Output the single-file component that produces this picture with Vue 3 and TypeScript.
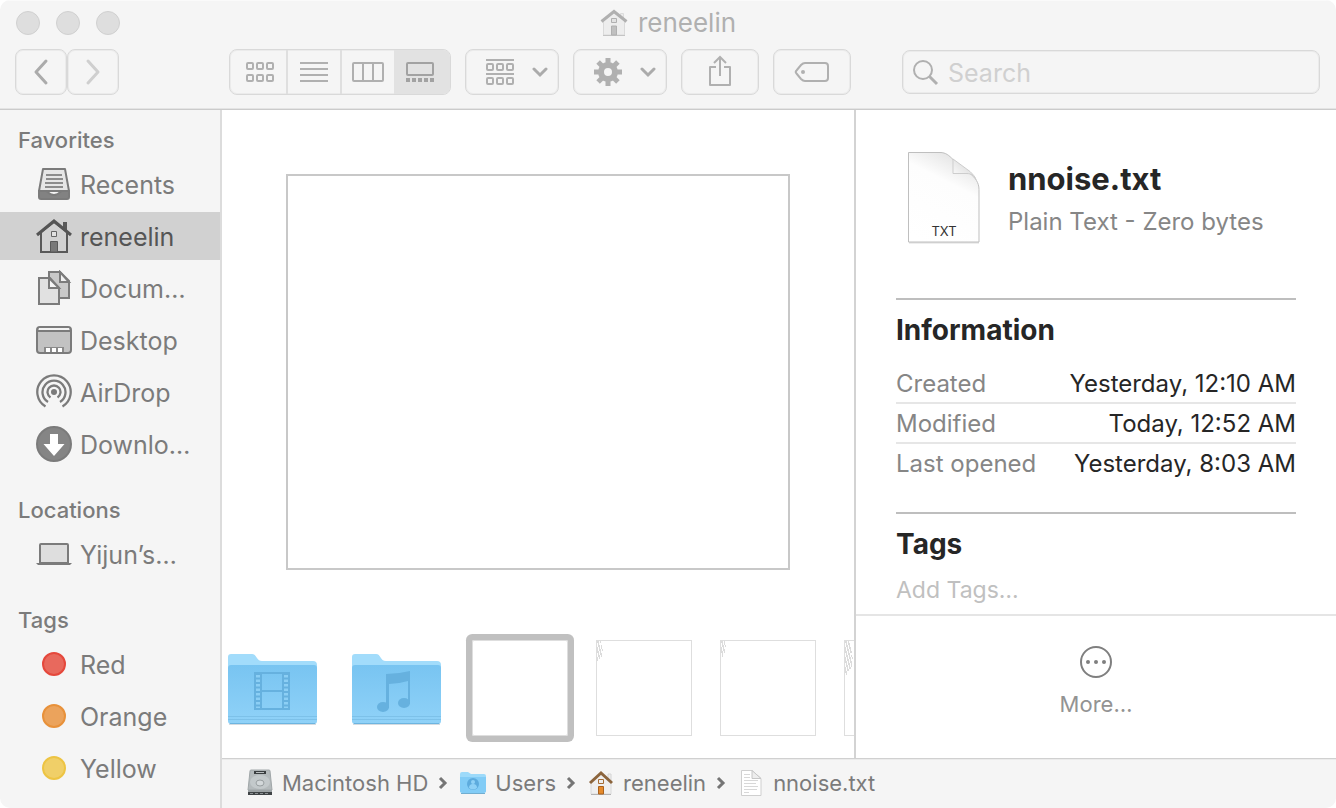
<script setup lang="ts">
import { ref } from 'vue'

interface SideItem { label: string; icon: string; color?: string; edge?: string }
interface SideSection { title: string; items: SideItem[] }

const sections: SideSection[] = [
  {
    title: 'Favorites',
    items: [
      { label: 'Recents', icon: 'recents' },
      { label: 'reneelin', icon: 'home' },
      { label: 'Docum…', icon: 'documents' },
      { label: 'Desktop', icon: 'desktop' },
      { label: 'AirDrop', icon: 'airdrop' },
      { label: 'Downlo…', icon: 'downloads' },
    ],
  },
  { title: 'Locations', items: [{ label: 'Yijun’s…', icon: 'laptop' }] },
  {
    title: 'Tags',
    items: [
      { label: 'Red', icon: 'tag', color: '#e8695d', edge: '#e5483c' },
      { label: 'Orange', icon: 'tag', color: '#eba35c', edge: '#e8913a' },
      { label: 'Yellow', icon: 'tag', color: '#f0cf68', edge: '#edc443' },
    ],
  },
]

const selected = ref('reneelin')
const views = ['Icons', 'List', 'Columns', 'Gallery']
const view = ref('Gallery')
const query = ref('')
const tagText = ref('')

const details = [
  { name: 'Created', value: 'Yesterday, 12:10 AM' },
  { name: 'Modified', value: 'Today, 12:52 AM' },
  { name: 'Last opened', value: 'Yesterday, 8:03 AM' },
]

const thumbs = [
  { id: 'movies', kind: 'folder', lines: [] as number[] },
  { id: 'music', kind: 'folder', lines: [] as number[] },
  { id: 'nnoise.txt', kind: 'text', lines: [] as number[] },
  { id: 'text-a', kind: 'text', lines: [4, 3, 5, 5, 6, 5, 6, 5, 3, 2] },
  { id: 'text-b', kind: 'text', lines: [5, 4, 5, 4, 5, 4, 3, 2] },
  { id: 'text-c', kind: 'text', lines: [4, 6, 5, 7, 6, 7, 6, 7, 8, 7, 8, 7, 7, 6, 4, 3, 2] },
]
const current = ref('nnoise.txt')

const crumbs = [
  { label: 'Macintosh HD', icon: 'disk' },
  { label: 'Users', icon: 'folder' },
  { label: 'reneelin', icon: 'house' },
  { label: 'nnoise.txt', icon: 'file' },
]
</script>

<template>
  <div class="window">
    <header class="titlebar">
      <div class="title-row">
        <div class="lights">
          <button v-for="n in ['Close', 'Minimize', 'Zoom']" :key="n" class="light" :aria-label="n"></button>
        </div>
        <h1 class="title">
          <svg width="28" height="28" viewBox="0 0 28 28" aria-hidden="true">
            <path d="M20.500 4.500h3v7h-3z" fill="#ececec" stroke="#dcdcdc" />
            <path d="M3.500 12 14 3.500 24.500 12v14h-21z" fill="#ededed" stroke="#dadada" />
            <path d="M3 26.500h22" stroke="#c4c4c4" />
            <path d="M1.500 12.500 14 2.500l12.500 10" fill="none" stroke="#b0b0b0" stroke-width="3" />
            <path d="M11.500 9.500h5v4h-5z" fill="#e2e2e2" stroke="#b0b0b0" />
            <path d="M11.500 17h5v9h-5z" fill="#c0c0c0" stroke="#b0b0b0" />
          </svg>
          <span>reneelin</span>
        </h1>
      </div>

      <div class="toolbar">
        <div class="history">
          <button class="tool nav" aria-label="Back">
            <svg width="20" height="28" viewBox="0 0 20 28" aria-hidden="true"><path d="M15 3 5 14l10 11" fill="none" stroke="#ababab" stroke-width="3" stroke-linecap="round" stroke-linejoin="round" /></svg>
          </button>
          <button class="tool nav" aria-label="Forward">
            <svg width="20" height="28" viewBox="0 0 20 28" aria-hidden="true"><path d="m5 3 10 11L5 25" fill="none" stroke="#cfcfcf" stroke-width="3" stroke-linecap="round" stroke-linejoin="round" /></svg>
          </button>
        </div>

        <div class="segments" role="group" aria-label="View">
          <button v-for="v in views" :key="v" class="segment" :class="{ on: v === view }" :aria-label="v" :aria-pressed="v === view" @click="view = v">
            <svg v-if="v === 'Icons'" width="32" height="24" viewBox="0 0 32 24" fill="none" stroke="#b0b0b0" stroke-width="2" aria-hidden="true">
              <rect x="3" y="3" width="6" height="6" rx="1" /><rect x="13" y="3" width="6" height="6" rx="1" /><rect x="23" y="3" width="6" height="6" rx="1" />
              <rect x="3" y="15" width="6" height="6" rx="1" /><rect x="13" y="15" width="6" height="6" rx="1" /><rect x="23" y="15" width="6" height="6" rx="1" />
            </svg>
            <svg v-else-if="v === 'List'" width="32" height="24" viewBox="0 0 32 24" stroke="#b0b0b0" stroke-width="2" aria-hidden="true">
              <path d="M2 3h28M2 9h28M2 15h28M2 21h28" />
            </svg>
            <svg v-else-if="v === 'Columns'" width="32" height="24" viewBox="0 0 32 24" fill="none" stroke="#b0b0b0" stroke-width="2" aria-hidden="true">
              <rect x="1" y="3" width="30" height="18" rx="1" /><path d="M11 3v18M21 3v18" />
            </svg>
            <svg v-else width="32" height="24" viewBox="0 0 32 24" fill="none" stroke="#a2a2a2" stroke-width="2" aria-hidden="true">
              <rect x="3" y="3" width="26" height="12" rx="1" /><path d="M2 20h28" stroke-width="4" stroke-dasharray="4 2" />
            </svg>
          </button>
        </div>

        <button class="tool menu" aria-label="Group items">
          <svg width="32" height="28" viewBox="0 0 32 28" fill="none" stroke="#b0b0b0" stroke-width="2" aria-hidden="true">
            <path d="M2 2h28M2 16h28" />
            <rect x="3" y="6" width="6" height="6" rx="1" /><rect x="13" y="6" width="6" height="6" rx="1" /><rect x="23" y="6" width="6" height="6" rx="1" />
            <rect x="3" y="20" width="6" height="6" rx="1" /><rect x="13" y="20" width="6" height="6" rx="1" /><rect x="23" y="20" width="6" height="6" rx="1" />
          </svg>
          <svg width="16" height="12" viewBox="0 0 16 12" aria-hidden="true"><path d="m2 3 6 6 6-6" fill="none" stroke="#ababab" stroke-width="3" stroke-linecap="round" /></svg>
        </button>

        <button class="tool menu" aria-label="Actions">
          <svg width="32" height="28" viewBox="0 0 32 28" fill="none" stroke="#b0b0b0" aria-hidden="true">
            <circle cx="16" cy="14" r="7" stroke-width="6" />
            <path d="M16 0v6M16 22v6M2 14h6M24 14h6M6.100 4.100l4 4M21.900 19.900l4 4M6.100 23.900l4-4M21.900 8.100l4-4" stroke-width="5" />
          </svg>
          <svg width="16" height="12" viewBox="0 0 16 12" aria-hidden="true"><path d="m2 3 6 6 6-6" fill="none" stroke="#ababab" stroke-width="3" stroke-linecap="round" /></svg>
        </button>

        <button class="tool single" aria-label="Share">
          <svg width="24" height="34" viewBox="0 0 24 34" fill="none" stroke="#b0b0b0" stroke-width="2" aria-hidden="true">
            <path d="M8 12H2v18h20V12h-6" stroke-linejoin="round" /><path d="M12 21V3M6 8l6-6 6 6" />
          </svg>
        </button>

        <button class="tool single" aria-label="Edit tags">
          <svg width="36" height="24" viewBox="0 0 36 24" aria-hidden="true">
            <path d="M11 3h20a3 3 0 0 1 3 3v12a3 3 0 0 1-3 3H11c-2 0-3-1-4-2l-4.500-5.500c-1-1-1-2 0-3L7 5c1-1 2-2 4-2z" fill="none" stroke="#b0b0b0" stroke-width="2" />
            <circle cx="9" cy="12" r="2" fill="#b0b0b0" />
          </svg>
        </button>

        <label class="search">
          <svg width="28" height="28" viewBox="0 0 28 28" fill="none" stroke="#b0b0b0" stroke-width="2" aria-hidden="true"><circle cx="11" cy="12" r="9" /><path d="m17 18 8 8" stroke-width="3" /></svg>
          <input v-model="query" type="text" placeholder="Search" aria-label="Search" />
        </label>
      </div>
    </header>

    <div class="body">
      <nav class="sidebar" aria-label="Sidebar">
        <section v-for="s in sections" :key="s.title" class="group">
          <h2>{{ s.title }}</h2>
          <ul>
            <li v-for="item in s.items" :key="item.label">
              <a href="#" class="side-item" :class="{ active: item.label === selected }" @click.prevent="selected = item.label">
                <svg width="36" height="36" viewBox="0 0 36 36" fill="none" stroke="#7b7b7b" stroke-width="2" aria-hidden="true">
                  <template v-if="item.icon === 'recents'">
                    <path d="M7 3h22l4 22H3z" fill="#e6e6e6" stroke-linejoin="round" />
                    <path d="M3 25h7c2 0 2 4 8 4s6-4 8-4h7v6a2 2 0 0 1-2 2H5a2 2 0 0 1-2-2z" fill="#828282" />
                    <path d="M10 9h16M10 13h17M9 17h18M9 21h18" stroke="#8c8c8c" />
                  </template>
                  <template v-else-if="item.icon === 'home'">
                    <path d="M5 14 18 4l13 10v20H5z" fill="#d2d2d2" stroke="#595959" />
                    <path d="M28 11V5h2v8" fill="#777" stroke="#595959" />
                    <path d="M1 17 18 3l17 14" stroke="#555" stroke-width="3" />
                    <path d="M15.500 13.500h5v5h-5z" fill="#e2e2e2" stroke="#666" stroke-width="1" />
                    <path d="M14.500 23.500h7V34h-7z" fill="#787878" stroke="#595959" stroke-width="1" />
                  </template>
                  <template v-else-if="item.icon === 'documents'">
                    <path d="M13 2h11l9 9v17H13z" fill="#c9c9c9" /><path d="M24 2v10h9z" fill="#f0f0f0" />
                    <path d="M3 8h11l9 10v16H3z" fill="#e1e1e1" /><path d="M13 8v10h10z" fill="#f5f5f5" />
                  </template>
                  <template v-else-if="item.icon === 'desktop'">
                    <rect x="1" y="5" width="34" height="26" rx="3" fill="#c2c2c2" />
                    <path d="M3 6h30v3H3z" fill="#f3f3f3" stroke="none" /><path d="M2 9h32" />
                    <path d="M8 25h20v5H8z" fill="#8a8a8a" stroke="none" />
                    <path d="M10 26h4v4h-4zM16 26h4v4h-4zM22 26h4v4h-4z" fill="#fff" stroke="none" />
                  </template>
                  <template v-else-if="item.icon === 'airdrop'">
                    <circle cx="18" cy="18" r="3" fill="#7b7b7b" stroke="none" />
                    <path d="M14.500 23.500a6.500 6.500 0 1 1 7 0M12 28a11.500 11.500 0 1 1 12 0M9.500 32.500a16.700 16.700 0 1 1 17 0" stroke-width="2.300" />
                  </template>
                  <template v-else-if="item.icon === 'downloads'">
                    <circle cx="18" cy="18" r="17" fill="#858585" />
                    <path d="M14 8h8v10h6.500L18 30 7.500 18H14z" fill="#fff" stroke="none" />
                  </template>
                  <template v-else-if="item.icon === 'laptop'">
                    <path d="M4 27V9q0-1 1-1h26q1 0 1 1v18z" fill="#dedede" />
                    <path d="M0 27h36l-2 2H2z" fill="#7b7b7b" stroke="none" />
                  </template>
                  <circle v-else cx="18" cy="18" r="11" :fill="item.color" :stroke="item.edge" />
                </svg>
                <span>{{ item.label }}</span>
              </a>
            </li>
          </ul>
        </section>
      </nav>

      <div class="content">
        <div class="panes">
          <main class="gallery">
            <div class="stage"><div class="page"></div></div>
            <div class="strip">
              <button v-for="t in thumbs" :key="t.id" class="thumb" :class="[t.kind, { current: t.id === current }]" :aria-label="t.id" @click="current = t.id">
                <svg v-if="t.kind === 'folder'" width="96" height="96" viewBox="0 0 96 96" aria-hidden="true">
                  <defs>
                    <linearGradient :id="'face-' + t.id" x1="0" y1="0" x2="0" y2="1">
                      <stop offset="0" stop-color="#78c4f1" /><stop offset="1" stop-color="#90d2f8" />
                    </linearGradient>
                  </defs>
                  <path d="M5 83h87v2H5z" fill="#d4dbe0" />
                  <path d="M4 17q0-3 3-3h21c5 0 4 7 10 7h51q4 0 4 4v20H4z" fill="#a2dcfb" />
                  <path d="M4 28q0-3 3-3h83q3 0 3 3v53q0 3-3 3H7q-3 0-3-3z" :fill="`url(#face-${t.id})`" />
                  <path d="M4 76.500h89M4 79.500h89" stroke="#7dc1e9" />
                  <path d="M6 83.500h85" stroke="#6db5e0" />
                  <g v-if="t.id === 'movies'" transform="translate(30 32)">
                    <path fill-rule="evenodd" fill="#66b1df" d="M0 0h36v38H0zM8 2v16h20V2zM8 20v16h20V20z" />
                    <path d="M4 3v33M32 3v33" stroke="#8ccff5" stroke-width="4" stroke-dasharray="2.500 2" />
                  </g>
                  <g v-else fill="#66b1df">
                    <path d="M38 34q12 0 24-3v33h-2V41q-10 3-19 3v24h-3z" />
                    <ellipse cx="56" cy="63" rx="6" ry="5" /><ellipse cx="35" cy="67" rx="6" ry="5" />
                  </g>
                </svg>
                <svg v-else-if="t.lines.length" width="10" height="36" viewBox="0 0 10 36" aria-hidden="true">
                  <path v-for="(w, i) in t.lines" :key="i" :d="`M0 ${1 + i * 2}h${w}`" stroke="#b8b8b8" stroke-dasharray="2 1 1 1" :stroke-dashoffset="(i * 7) % 5" />
                </svg>
              </button>
            </div>
          </main>

          <aside class="info">
            <div class="info-scroll">
              <div class="summary">
                <svg width="80" height="98" viewBox="0 0 80 98" aria-hidden="true">
                  <defs>
                    <linearGradient id="sheet" x1="0.200" y1="1" x2="0.600" y2="0">
                      <stop offset="0" stop-color="#fff" /><stop offset="0.700" stop-color="#fdfdfd" /><stop offset="1" stop-color="#e4e4e4" />
                    </linearGradient>
                    <linearGradient id="curl" x1="0" y1="1" x2="1" y2="0">
                      <stop offset="0" stop-color="#fff" /><stop offset="1" stop-color="#d0d0d0" />
                    </linearGradient>
                  </defs>
                  <path d="M5 94.500h70" stroke="#dedede" stroke-width="2" />
                  <path d="M4.500 4.500H36c6 0 9 3 13 7l17 14c5 4 9 9 9 16v52.500H4.500z" fill="url(#sheet)" stroke="#bfbfbf" />
                  <path d="M49 11v14.500h14c4 0 7 2 9 6-1-3-3-5-6-8z" fill="url(#curl)" stroke="#cdcdcd" />
                  <text x="40" y="88" text-anchor="middle" font-size="13" fill="#333">TXT</text>
                </svg>
                <div class="summary-text">
                  <h2>nnoise.txt</h2>
                  <p>Plain Text - Zero bytes</p>
                </div>
              </div>
              <section class="block details">
                <h3>Information</h3>
                <table>
                  <tbody>
                    <tr v-for="d in details" :key="d.name">
                      <th scope="row">{{ d.name }}</th>
                      <td>{{ d.value }}</td>
                    </tr>
                  </tbody>
                </table>
              </section>
              <section class="block">
                <h3>Tags</h3>
                <input v-model="tagText" class="add-tags" type="text" placeholder="Add Tags…" aria-label="Add Tags" />
              </section>
            </div>
            <div class="actions">
              <button class="more">
                <svg width="32" height="32" viewBox="0 0 32 32" aria-hidden="true">
                  <circle cx="16" cy="16" r="15" fill="none" stroke="#7f7f7f" stroke-width="2" />
                  <circle cx="8" cy="16" r="2" fill="#7f7f7f" /><circle cx="16" cy="16" r="2" fill="#7f7f7f" /><circle cx="24" cy="16" r="2" fill="#7f7f7f" />
                </svg>
                <span>More…</span>
              </button>
            </div>
          </aside>
        </div>

        <nav class="pathbar" aria-label="Path">
          <ol>
            <li v-for="(c, i) in crumbs" :key="c.label">
              <a href="#" @click.prevent>
                <svg width="28" height="28" viewBox="0 0 28 28" aria-hidden="true">
                  <template v-if="c.icon === 'disk'">
                    <path d="M5 1h18q1 0 1 1l2 19H2L4 2q0-1 1-1z" fill="#b4babc" stroke="#a0a6a8" />
                    <path d="M8 2h12v3H8z" fill="#3a3e40" /><path d="M10 3.500h8" stroke="#b8bdbf" />
                    <ellipse cx="14" cy="13" rx="10" ry="7" fill="#c3c9cb" /><ellipse cx="14" cy="14" rx="4" ry="3" fill="#d3d8da" stroke="#999fa1" />
                    <path d="M2 21h24v2H2z" fill="#9da3a5" /><path d="M2 23h24v3H2z" fill="#3f4345" /><path d="M4 24.500h20" stroke="#8d9294" stroke-dasharray="3 2" />
                  </template>
                  <template v-else-if="c.icon === 'folder'">
                    <path d="M1 5q0-2 2-2h6l3 2h13q2 0 2 2v16H1z" fill="#9ddafa" />
                    <path d="M1 8h26v14q0 2-2 2H3q-2 0-2-2z" fill="#82ccf6" /><path d="M2 24.500h24" stroke="#72aed0" />
                    <circle cx="14" cy="15" r="6" fill="#5dabdd" /><circle cx="14" cy="13" r="2" fill="#8fd1f6" /><path d="M10 19q0-4 4-4t4 4q-4 3-8 0z" fill="#8fd1f6" />
                  </template>
                  <template v-else-if="c.icon === 'house'">
                    <path d="M21 5h3v8h-3z" fill="#eee" stroke="#d4d4d4" />
                    <path d="M4 13 14 5l10 8v12H4z" fill="#efefef" stroke="#dadada" /><path d="M4 25.500h20" stroke="#b4b4b4" />
                    <path d="m3 14 11-10 11 10" fill="none" stroke="#8c653d" stroke-width="3" />
                    <path d="M11.500 10.500h5v4h-5z" fill="#eee" stroke="#a56d35" />
                    <path d="M11.500 17.500h5V25h-5z" fill="#e58a2b" stroke="#a9611d" />
                  </template>
                  <template v-else>
                    <path d="M4.500 1.500H15l9 8v17H4.500z" fill="#fff" stroke="#cfcfcf" /><path d="M15 1.500v8h9z" fill="#ededed" stroke="#c6c6c6" />
                    <path d="M7 5.500h6M7 8.500h6M7 11.500h14M7 14.500h12M7 17.500h14M7 20.500h13M7 23.500h5" stroke="#d8d8d8" />
                  </template>
                </svg>
                <span>{{ c.label }}</span>
              </a>
              <svg v-if="i < crumbs.length - 1" class="sep" width="10" height="16" viewBox="0 0 10 16" aria-hidden="true"><path d="m2 3 5 5-5 5" fill="none" stroke="#757575" stroke-width="3" /></svg>
            </li>
          </ol>
        </nav>
      </div>
    </div>
  </div>
</template>

<style>
body { margin: 0; background: #fff; }
</style>

<style scoped>
* { box-sizing: border-box; }
h1, h2, h3, p, ul, ol { margin: 0; padding: 0; list-style: none; font-weight: 400; }
button, input { font: inherit; color: inherit; background: none; border: 0; padding: 0; margin: 0; }
input { outline: none; min-width: 0; }
a { color: inherit; text-decoration: none; }
svg { display: block; flex: none; }

.window {
  min-height: 100vh;
  display: flex;
  flex-direction: column;
  overflow: hidden;
  border-radius: 10px;
  background: #f5f5f5;
  color: #7b7b7b;
  font-family: Inter, "Liberation Sans", sans-serif;
  font-size: 25px;
  line-height: 32px;
}

.titlebar {
  flex: none;
  border-top: 1px solid #fafafa;
  border-bottom: 1px solid #cbcbcb;
  box-shadow: inset 0 -1px 0 #e4e4e4;
}
.title-row {
  display: grid;
  grid-template-columns: 1fr auto 1fr;
  align-items: center;
  height: 43px;
  padding: 0 16px;
}
.lights { display: flex; gap: 16px; }
.light { width: 24px; height: 24px; border-radius: 50%; border: 1px solid #d0d0d0; background: #dedede; }
.title { display: flex; align-items: center; gap: 10px; color: #b0b0b0; font-size: 26px; }

.toolbar { display: flex; align-items: center; height: 65px; padding: 0 16px 9px 15px; gap: 14px; }
.history { display: flex; margin-right: 96px; }
.tool, .segments, .search {
  flex: none;
  height: 46px;
  border: 1px solid #d9d9d9;
  border-radius: 8px;
  box-shadow: inset 0 0 0 1px #ebebeb;
}
.tool { display: flex; align-items: center; justify-content: center; }
.nav { width: 52px; }
.segments { display: flex; width: 222px; overflow: hidden; }
.segment { flex: 1; display: flex; align-items: center; justify-content: center; }
.segment:first-child { padding-left: 4px; }
.segment:last-child { padding-right: 4px; }
.segment + .segment:not(.on) { border-left: 2px solid #dfdfdf; }
.segment.on { background: #e2e2e2; }
.menu { width: 94px; gap: 16px; padding-left: 8px; }
.single { width: 78px; }
.search { display: flex; align-items: center; flex: 1; min-width: 0; height: 44px; margin-left: 37px; padding: 0 8px 0 9px; gap: 8px; }
.search input { flex: 1; width: 100%; padding-top: 2px; color: #888; }
.search input::placeholder { color: #d0d0d0; opacity: 1; }

.body { flex: 1; display: flex; min-height: 0; }
.sidebar { flex: none; width: 222px; padding-top: 10px; border-right: 2px solid #dcdcdc; }
.group + .group { margin-top: 22px; }
.group h2 { padding: 4px 18px; font-size: 22px; font-weight: 500; }
.group ul { display: grid; gap: 4px; }
.side-item { display: flex; align-items: center; gap: 8px; height: 48px; padding-left: 36px; }
.side-item span { padding-top: 2px; }
.side-item.active { background: #d1d1d1; color: #555; }

.content { flex: 1; min-width: 0; display: flex; flex-direction: column; }
.panes { flex: 1; display: flex; background: #fff; }
.gallery { flex: 1; min-width: 0; display: flex; flex-direction: column; overflow: hidden; }
.stage { flex: 1; display: flex; padding: 64px 64px 60px; }
.page { flex: 1; border: 2px solid #c8c8c8; }
.strip { display: flex; gap: 28px; padding: 10px 0 22px 2px; }
.thumb { flex: none; width: 96px; height: 96px; }
.thumb.text { border: 1px solid #dedede; display: flex; align-items: flex-start; }
.thumb.current { box-shadow: 0 0 0 6px #c0c0c0; outline: 0; border-radius: 2px; }

.info { flex: none; width: 482px; display: flex; flex-direction: column; border-left: 2px solid #d3d3d3; }
.info-scroll { flex: 1; padding: 38px 40px 0; }
.summary { display: flex; gap: 24px; padding-left: 8px; height: 150px; }
.summary-text { padding-top: 13px; }
.summary-text h2 { color: #262626; font-size: 31px; font-weight: 700; line-height: 36px; }
.summary-text p { margin-top: 9px; font-size: 24px; color: #868686; }
.block { border-top: 2px solid #bebebe; padding-top: 12px; }
.details { padding-bottom: 30px; }
.block h3 { color: #262626; font-size: 28px; font-weight: 700; line-height: 36px; }
table { width: 100%; margin-top: 14px; border-collapse: separate; border-spacing: 0; font-size: 24px; }
th, td { height: 40px; padding: 2px 0 0; border-top: 2px solid transparent; }
tr + tr > * { border-top-color: #e6e6e6; }
th { text-align: left; font-weight: 400; color: #868686; }
td { text-align: right; color: #262626; }
.add-tags { display: block; width: 100%; height: 32px; margin-top: 12px; font-size: 23px; }
.add-tags::placeholder { color: #c0c0c0; opacity: 1; }
.actions { flex: none; height: 144px; border-top: 2px solid #e5e5e5; display: flex; justify-content: center; }
.more { display: flex; flex-direction: column; align-items: center; justify-content: flex-start; gap: 10px; padding-top: 30px; font-size: 22px; color: #939393; }

.pathbar { flex: none; height: 50px; border-top: 1px solid #d0d0d0; box-shadow: inset 0 1px 0 #ebebeb; font-size: 22px; }
.pathbar ol { display: flex; align-items: center; height: 48px; padding-left: 24px; }
.pathbar li, .pathbar a { display: flex; align-items: center; }
.pathbar a { gap: 8px; }
.sep { margin: 0 11px 0 10px; }
</style>
